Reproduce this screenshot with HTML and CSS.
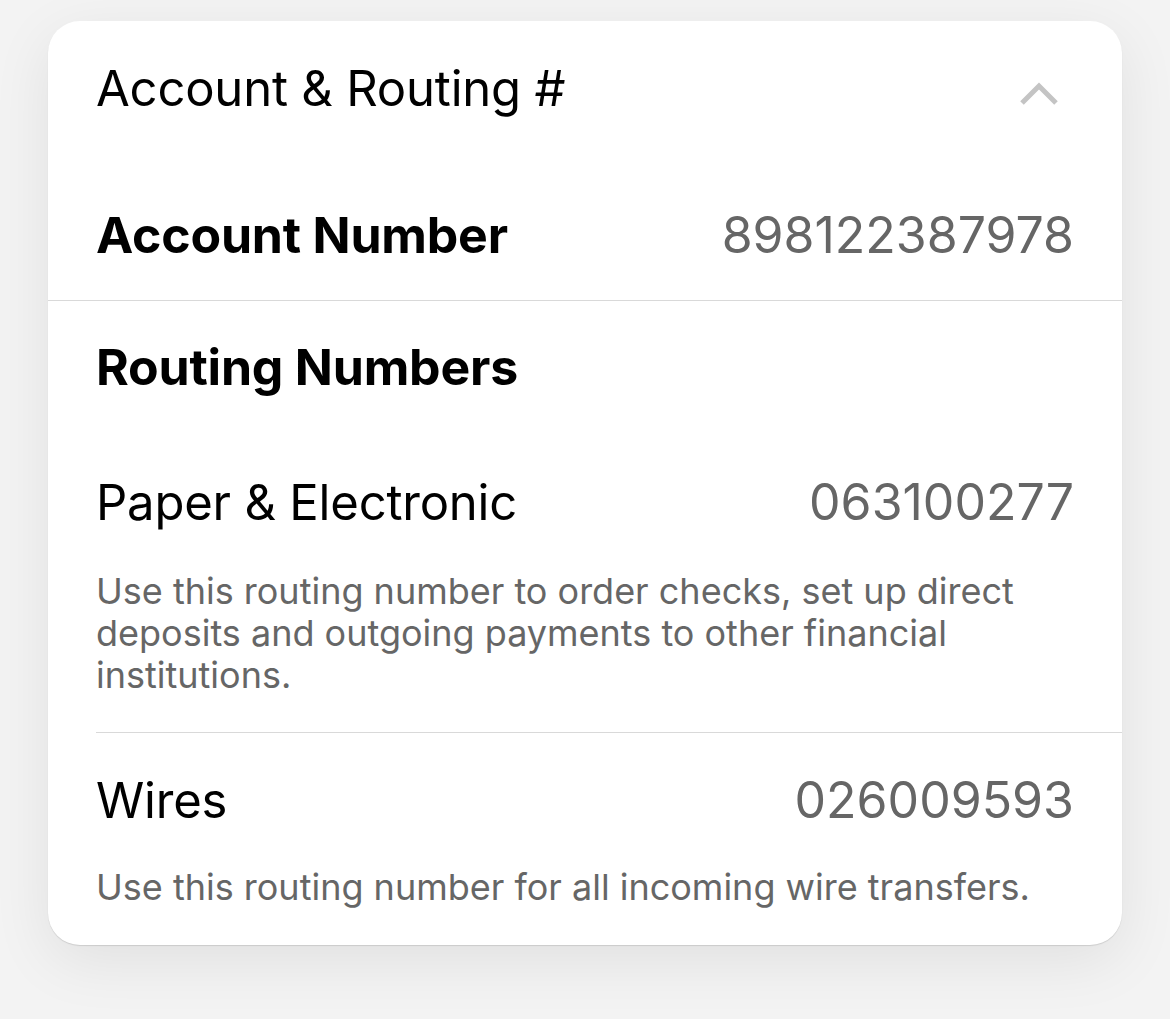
FILE: index.html
```html
<!DOCTYPE html>
<html lang="en">
<head>
<meta charset="utf-8">
<title>Account & Routing</title>
<link rel="stylesheet" href="styles.css">
</head>
<body>
<main class="page">
  <section class="card">
    <header class="card-header">
      <h1 class="card-title">Account &amp; Routing #</h1>
      <svg class="chevron" width="40" height="24" viewBox="0 0 40 24" aria-hidden="true">
        <path d="M3 21 L20 4 L37 21" fill="none" stroke="#c4c4c4" stroke-width="5" stroke-linecap="butt" stroke-linejoin="miter"/>
      </svg>
    </header>
    <div class="row account-row">
      <span class="label-bold">Account Number</span>
      <span class="value">898122387978</span>
    </div>
    <div class="routing">
      <h2 class="label-bold routing-title">Routing Numbers</h2>
      <div class="item item-first">
        <div class="row">
          <span class="label">Paper &amp; Electronic</span>
          <span class="value">063100277</span>
        </div>
        <p class="desc">Use this routing number to order checks, set up direct deposits and outgoing payments to other financial institutions.</p>
      </div>
      <div class="item item-last">
        <div class="row">
          <span class="label">Wires</span>
          <span class="value">026009593</span>
        </div>
        <p class="desc desc-last">Use this routing number for all incoming wire transfers.</p>
      </div>
    </div>
  </section>
</main>
</body>
</html>
```

FILE: styles.css
```css
* { box-sizing: border-box; }
html, body { margin: 0; padding: 0; }
body {
  background: #f3f3f3;
  font-family: Inter, "Noto Sans", sans-serif;
  color: #000;
  width: 1170px;
  height: 1019px;
  overflow: hidden;
}
.page {
  padding: 21px 48px 0 48px;
}
.card {
  background: #fff;
  border-radius: 32px;
  box-shadow: 0 1px 1px rgba(0,0,0,0.12), 0 16px 60px rgba(0,0,0,0.08);
  overflow: hidden;
}
.card-header {
  display: flex;
  align-items: center;
  justify-content: space-between;
  padding: 38px 63px 36px 48px;
}
.card-title {
  margin: 0;
  font-weight: 400;
  font-size: 49px;
  line-height: 60px;
  letter-spacing: -0.2px;
}
.chevron { display: block; margin-top: 10px; }
.row {
  display: flex;
  justify-content: space-between;
  align-items: baseline;
  line-height: 60px;
}
.account-row {
  padding: 50px 48px 35px 48px;
  border-bottom: 1px solid #d9d9d9;
}
.label-bold {
  font-weight: 700;
  font-size: 50px;
  letter-spacing: -0.2px;
}
.label {
  font-size: 49px;
  font-weight: 400;
  letter-spacing: -0.2px;
}
.value {
  font-size: 50px;
  color: #666;
  letter-spacing: 0;
}
.routing {
  padding-left: 48px;
}
.routing-title {
  margin: 0;
  padding: 36px 0 0 0;
  line-height: 60px;
}
.item {
  padding: 0 48px 0 0;
}
.item-first {
  padding-top: 75px;
  padding-bottom: 36px;
  border-bottom: 1px solid #d9d9d9;
}
.item-last {
  padding-top: 37px;
  padding-bottom: 37px;
}
.desc {
  margin: 37px 0 0 0;
  font-size: 36px;
  line-height: 42px;
  color: #666;
}
.desc-last {
  margin-top: 35px;
}
```
